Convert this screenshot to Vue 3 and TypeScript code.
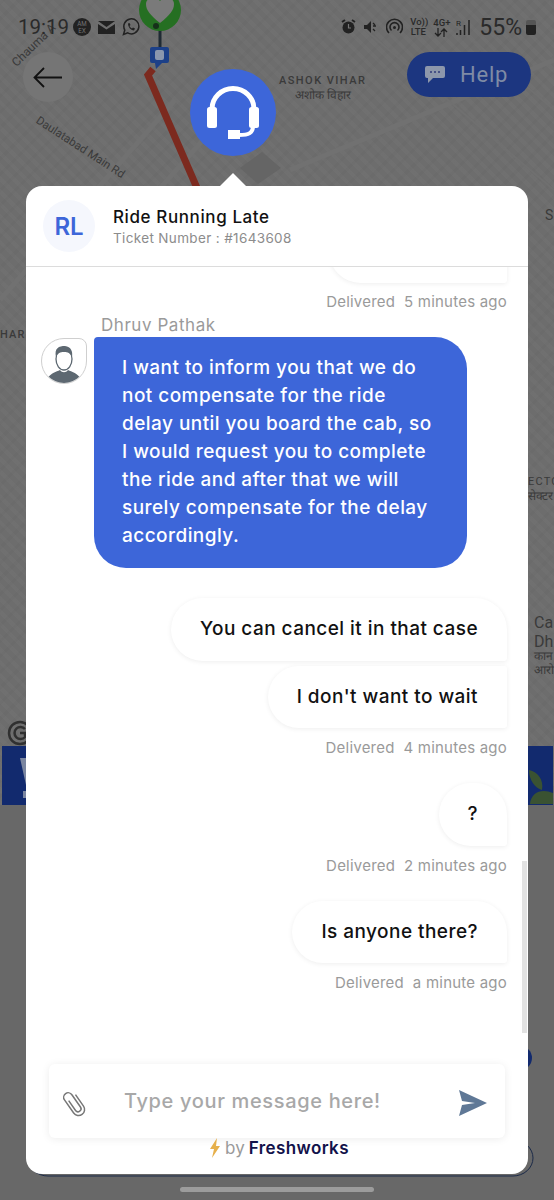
<script setup lang="ts">
interface Sent {
  text: string;
  status?: string;
}

const sentMessages: Sent[] = [
  { text: 'You can cancel it in that case' },
  { text: "I don't want to wait", status: '4 minutes ago' },
  { text: '?', status: '2 minutes ago' },
  { text: 'Is anyone there?', status: 'a minute ago' },
];
</script>

<template>
  <div class="screen">
    <!-- map behind the sheet -->
    <div class="map">
      <svg class="map-art" width="554" height="1200" viewBox="0 0 554 1200">
        <path d="M0 300 L175 100 M60 300 L230 110 M290 170 L554 60" stroke="#717171" stroke-width="5" fill="none" />
        <path d="M426 0 L554 110 M330 0 L554 190" stroke="#707070" stroke-width="2" fill="none" />
        <path d="M240 168 L262 152 L281 168 L258 184 Z" fill="#656565" />
        <path d="M153 69 L148 75 L197 188" stroke="#7c2a1f" stroke-width="7" fill="none" />
        <path d="M160 28 V50" stroke="#1f2a33" stroke-width="3" />
        <circle cx="160" cy="10" r="21" fill="#256f22" />
        <path d="M160 23 C150 15 146 10 146 4 C146 -3 156 -4 160 1 C164 -4 174 -3 174 4 C174 10 170 15 160 23 Z" fill="#7a7a7a" />
        <circle cx="156" cy="26" r="3" fill="#16301a" />
        <path d="M152 47 H167 A2 2 0 0 1 169 49 V61 A2 2 0 0 1 167 63 H162 L156 69 L155 63 H152 A2 2 0 0 1 150 61 V49 A2 2 0 0 1 152 47 Z" fill="#1c4088" />
        <rect x="155" y="50" width="9" height="10" rx="2" fill="#8a97ad" />
        <path d="M2 746 H26 V805 H2 Z M528 746 H553 V805 H528 Z" fill="#122a6e" />
        <path d="M20 758 H26 V785 Z M23 791 H26 V798 H23 Z" fill="#7b86a0" />
        <path d="M529 770 C538 772 544 780 542 790 C535 788 529 780 529 770 Z M530 804 C531 792 542 788 553 793 V804 Z" fill="#3a5232" />
        <circle cx="20" cy="733" r="11" fill="none" stroke="#303030" stroke-width="2.500" />
        <path d="M25 729A6 6 0 1 0 25 737V733H20" fill="none" stroke="#303030" stroke-width="2.500" />
        <circle cx="520" cy="1058" r="12" fill="#122a6e" />
        <rect x="28" y="1140" width="505" height="36" rx="20" fill="none" stroke="#1b2a48" stroke-width="1" />
      </svg>
      <span class="map-label road-a">Chauma A</span>
      <span class="map-label road-b">Daulatabad Main Rd</span>
      <span class="map-label area">ASHOK VIHAR<small>अशोक विहार</small></span>
      <span class="map-label edge-left">HAR</span>
      <span class="map-label edge-s">S</span>
      <span class="map-label edge-sector">ECTO<small>सेक्टर</small></span>
      <span class="map-label edge-ca">Ca<br />Dh<small>कान<br />आरो</small></span>
    </div>

    <!-- status bar -->
    <div class="status-bar">
      <span class="clock">19:19</span>
      <span class="amex">AM<br />EX</span>
      <svg width="17" height="13" viewBox="0 0 17 13"><path d="M0 0H17L8.500 6Z M0 3L8.500 8.500L17 3V13H0Z" fill="#222" /></svg>
      <svg class="wa" width="18" height="18" viewBox="0 0 18 18"><path d="M1.500 16.500L2.800 12A7.500 7.500 0 1 1 5.700 14.900Z" fill="none" stroke="#222" stroke-width="1.500" /><path d="M6 5.500C6 9 8.500 12 12 12.500L13 10.500L11 9.500L10 10.500C9 10 8 9 7.500 8L8.500 7L7.500 5Z" fill="#222" /></svg>
      <span class="status-gap"></span>
      <div class="status-right">
        <svg width="15" height="16" viewBox="0 0 15 16"><circle cx="7.500" cy="8.500" r="6" fill="#222" /><path d="M7.500 5V9H10" stroke="#777" stroke-width="1.200" fill="none" /><path d="M1 3L4 1M14 3L11 1" stroke="#222" stroke-width="2" /></svg>
        <svg width="16" height="16" viewBox="0 0 16 16"><path d="M1 6H4L8 2V14L4 10H1Z" fill="#222" /><path d="M10 4L12 6M10 7H13M10 10L12 12" stroke="#222" stroke-width="1.300" /></svg>
        <svg width="17" height="18" viewBox="0 0 17 18"><path d="M3 15A8 8 0 1 1 14 15M5.500 12.500A4.500 4.500 0 1 1 11.500 12.500" fill="none" stroke="#222" stroke-width="1.600" /><circle cx="8.500" cy="9.500" r="1.500" fill="#222" /></svg>
        <span class="net">Vo))<br />LTE</span>
        <span class="net">4G+
          <svg width="14" height="9" viewBox="0 0 14 9"><path d="M4 0V8M1 5L4 8L7 5M10 9V1M7 4L10 1L13 4" fill="none" stroke="#222" stroke-width="1.300" /></svg>
        </span>
        <svg width="15" height="17" viewBox="0 0 15 17"><text x="0" y="7" font-size="8" font-family="Roboto, sans-serif" fill="#222">R</text><path d="M1 16V14M4.500 16V11M8.500 16V6M13 16V1" stroke="#222" stroke-width="1.500" /></svg>
        <span class="battery-text">55%</span>
        <span class="battery"></span>
      </div>
    </div>

    <button class="back-btn">
      <svg width="30" height="21" viewBox="0 0 30 21"><path d="M29 10.500H1.500M11 1L1.500 10.500L11 20" fill="none" stroke="#111" stroke-width="1.800" /></svg>
    </button>

    <button class="help-btn">
      <svg width="22" height="20" viewBox="0 0 22 20"><path d="M3 1H19A2 2 0 0 1 21 3V11A2 2 0 0 1 19 13H9L4 18V13H3A2 2 0 0 1 1 11V3A2 2 0 0 1 3 1Z" fill="#8d97ab" /><circle cx="7" cy="7" r="1" fill="#303a7a" /><circle cx="11" cy="7" r="1" fill="#303a7a" /><circle cx="15" cy="7" r="1" fill="#303a7a" /></svg>
      Help
    </button>

    <div class="agent-badge">
      <svg width="52" height="54" viewBox="0 0 52 54">
        <path d="M5 23A21 20.500 0 0 1 47 23" fill="none" stroke="#fff" stroke-width="5" />
        <rect x="0" y="21" width="10" height="21" rx="2.500" fill="#fff" />
        <rect x="42" y="21" width="10" height="21" rx="2.500" fill="#fff" />
        <path d="M46 40C46 47 42 49 32 49" fill="none" stroke="#fff" stroke-width="4" />
        <rect x="21" y="44" width="12" height="9" fill="#fff" />
      </svg>
    </div>

    <span class="pointer"></span>

    <!-- conversation sheet -->
    <section class="sheet">
      <header class="sheet-head">
        <div class="initials">RL</div>
        <div>
          <h1>Ride Running Late</h1>
          <p>Ticket Number : #1643608</p>
        </div>
      </header>

      <div class="thread">
        <div class="bubble out cut-off"></div>
        <div class="delivered first">Delivered&nbsp; 5 minutes ago</div>

        <div class="agent-name">Dhruv Pathak</div>
        <div class="agent-row">
          <div class="avatar">
            <svg width="44" height="44" viewBox="0 0 44 44">
              <path d="M4 41C10 33 14 33 18 31C20 34 24 34 26 31C30 33 34 33 40 41C30 46 14 46 4 41Z" fill="#5d6871" />
              <ellipse cx="22" cy="20" rx="8" ry="11" fill="#fff" stroke="#5d6871" stroke-width="1.300" />
              <path d="M14 18C12 9 17 7 23 7C29 8 31 12 30 18C28 14 26 13 22 13C18 13 16 14 14 18Z" fill="#5d6871" />
            </svg>
          </div>
          <div class="bubble in">I want to inform you that we do not compensate for the ride delay until you board the cab, so I would request you to complete the ride and after that we will surely compensate for the delay accordingly.</div>
        </div>

        <template v-for="msg in sentMessages" :key="msg.text">
          <div class="bubble out" :class="{ tail: !msg.status }">{{ msg.text }}</div>
          <div v-if="msg.status" class="delivered">Delivered&nbsp; {{ msg.status }}</div>
        </template>

        <span class="scrollbar"></span>
      </div>

      <div class="composer">
        <svg width="26" height="30" viewBox="0 0 26 30">
          <g transform="rotate(-35 13 15)">
            <path d="M10 10V22A3 3 0 0 0 16 22V7A4.500 4.500 0 0 0 7 7V23A6 6 0 0 0 19 23V9" fill="none" stroke="#777" stroke-width="1.500" />
          </g>
        </svg>
        <span class="placeholder">Type your message here!</span>
        <svg width="30" height="28" viewBox="0 0 30 28">
          <path d="M1 1L29 14L1 27L4 16L17 14L4 12Z" fill="#5f7896" />
        </svg>
      </div>

      <footer class="brand">
        <svg width="12" height="20" viewBox="0 0 12 20"><path d="M8 0L1 11H5L3 20L11 8H7Z" fill="#e6b04c" /></svg>
        <span>by</span> <b>Freshworks</b>
      </footer>
    </section>

    <span class="home-bar"></span>
  </div>
</template>

<style>
html,
body {
  margin: 0;
  background: #686868;
}
</style>

<style scoped>
.screen {
  position: relative;
  width: 554px;
  height: 1200px;
  padding-top: 186px;
  box-sizing: border-box;
  overflow: hidden;
  background: #686868;
  font-family: Inter, "Noto Sans", sans-serif;
}

/* ---- map ---- */
.map {
  position: absolute;
  left: 0;
  right: 0;
  top: 0;
  height: 805px;
  background:
    repeating-linear-gradient(45deg, rgba(255, 255, 255, 0.018) 0 4px, transparent 4px 9px),
    repeating-linear-gradient(-45deg, rgba(0, 0, 0, 0.02) 0 3px, transparent 3px 11px),
    #6d6d6d;
}

.map-art {
  position: absolute;
  left: 0;
  top: 0;
}

.map-label {
  position: absolute;
  font-family: Roboto, sans-serif;
  color: #3a3a3a;
  font-size: 13px;
  white-space: nowrap;
}

.map-label small {
  display: block;
  font-size: 12px;
  letter-spacing: 0;
}

.road-a {
  left: 6px;
  top: 38px;
  transform: rotate(-44deg);
  font-size: 12px;
}

.road-b {
  left: 29px;
  top: 140px;
  transform: rotate(33deg);
  font-size: 11.500px;
}

.area {
  left: 279px;
  top: 73px;
  text-align: center;
  font-size: 11px;
  font-weight: 500;
  letter-spacing: 1.450px;
  line-height: 15px;
}

.edge-left {
  left: 0;
  top: 328px;
  font-size: 11px;
  font-weight: 500;
  letter-spacing: 1.200px;
}

.edge-s {
  left: 545px;
  top: 207px;
  font-size: 14px;
}

.edge-sector {
  left: 528px;
  top: 475px;
  font-size: 11px;
  letter-spacing: 1.200px;
  line-height: 14px;
}

.edge-ca {
  left: 534px;
  top: 613px;
  font-size: 16px;
  line-height: 19px;
}

.edge-ca small {
  line-height: 14px;
  margin-top: -2px;
}

/* ---- status bar ---- */
.status-bar {
  position: absolute;
  left: 18px;
  right: 18px;
  top: 14px;
  height: 26px;
  display: flex;
  align-items: center;
  gap: 7px;
  color: #2a2a2a;
}

.clock {
  width: 48px;
  font-family: Roboto, sans-serif;
  font-size: 20.500px;
}

.amex {
  width: 18px;
  height: 18px;
  border-radius: 50%;
  background: #222;
  color: #777;
  font-size: 6px;
  line-height: 7px;
  text-align: center;
  padding-top: 2px;
  box-sizing: border-box;
}

.status-gap {
  flex: 1;
}

.status-right {
  display: flex;
  align-items: center;
  gap: 7px;
}

.net {
  width: 16px;
  font-family: Roboto, sans-serif;
  font-size: 9.500px;
  font-weight: 500;
  line-height: 10px;
  text-align: center;
  white-space: nowrap;
}

.net svg {
  display: block;
  margin: 0 auto;
}

.battery-text {
  margin-left: 1px;
  font-family: Roboto, sans-serif;
  font-size: 23px;
}

.battery {
  width: 10px;
  height: 15px;
  margin-left: -3px;
  background: linear-gradient(#555 0 35%, #222 35%);
  border-radius: 2px;
}

/* ---- floating buttons ---- */
.back-btn {
  position: absolute;
  left: 23px;
  top: 52px;
  width: 50px;
  height: 50px;
  border: none;
  border-radius: 50%;
  padding: 0;
  background: #757575;
  display: flex;
  align-items: center;
  justify-content: center;
}

.help-btn {
  position: absolute;
  left: 407px;
  top: 52px;
  width: 124px;
  height: 45px;
  border: none;
  border-radius: 23px;
  background: #1c3680;
  color: #7f8ba5;
  font-family: Roboto, sans-serif;
  font-size: 22px;
  letter-spacing: 0.8px;
  display: flex;
  align-items: center;
  gap: 14px;
  padding: 0 0 0 17px;
}

.agent-badge {
  position: absolute;
  left: 190px;
  top: 69px;
  width: 86px;
  height: 87px;
  border-radius: 50%;
  background: #3d66d9;
  display: flex;
  align-items: center;
  justify-content: center;
}

.pointer {
  position: absolute;
  left: 220px;
  top: 173px;
  border-left: 13px solid transparent;
  border-right: 13px solid transparent;
  border-bottom: 13px solid #fff;
}

/* ---- sheet ---- */
.sheet {
  position: relative;
  margin: 0 26px;
  height: 988px;
  display: flex;
  flex-direction: column;
  background: #fff;
  border-radius: 16px;
  overflow: hidden;
}

.sheet-head {
  height: 81px;
  flex: none;
  box-sizing: border-box;
  padding: 14px 18px 0 17px;
  display: flex;
  gap: 18px;
  border-bottom: 1px solid #dcdcdc;
}

.initials {
  width: 52px;
  height: 52px;
  border-radius: 50%;
  background: #f5f7fd;
  color: #3d66d9;
  font-size: 24px;
  font-weight: 600;
  display: flex;
  align-items: center;
  justify-content: center;
}

.sheet-head h1 {
  margin: 6px 0 1px;
  font-size: 17px;
  font-weight: 500;
  line-height: 22px;
  letter-spacing: 0.6px;
  color: #111;
}

.sheet-head p {
  margin: 0;
  font-size: 13.500px;
  line-height: 18px;
  letter-spacing: 0.35px;
  color: #8c8c8c;
}

.thread {
  position: relative;
  flex: 1;
  overflow: hidden;
  display: flex;
  flex-direction: column;
  align-items: flex-end;
  padding-right: 21px;
  min-height: 0;
}

.bubble {
  box-sizing: border-box;
  font-size: 19px;
  line-height: 28px;
  letter-spacing: 0.45px;
}

.bubble.out {
  padding: 17px 29px 17.500px;
  border-radius: 32px 32px 3px 32px;
  background: #fff;
  color: #111;
  font-weight: 500;
  box-shadow: 0 1px 5px rgba(0, 0, 0, 0.07);
  margin-top: 26px;
}

.bubble.out.tail + .bubble.out {
  margin-top: 5px;
  border-radius: 32px 3px 3px 32px;
}

.bubble.cut-off {
  width: 178px;
  height: 63px;
  margin-top: -47px;
}

.delivered {
  margin-top: 10px;
  font-size: 15px;
  line-height: 19px;
  letter-spacing: 0.22px;
  color: #9a9a9a;
}

.delivered.first {
  margin-top: 9px;
}

.agent-name {
  align-self: flex-start;
  margin: 3px 0 0 75px;
  font-size: 17px;
  line-height: 22px;
  letter-spacing: 0.55px;
  color: #9a9a9a;
}

.agent-row {
  align-self: flex-start;
  display: flex;
  gap: 7px;
  margin: 1px 0 4px 15px;
}

.avatar {
  width: 44px;
  height: 44px;
  margin-top: 1px;
  overflow: hidden;
  border: 1px solid #cfcfcf;
  border-radius: 50% 8px 50% 50%;
  flex: none;
}

.bubble.in {
  width: 373px;
  padding: 17px 30px 18px 28px;
  border-radius: 4px 32px 32px 32px;
  background: #3d66d9;
  color: #fff;
  font-weight: 500;
}

.scrollbar {
  position: absolute;
  right: 1px;
  top: 594px;
  width: 5px;
  height: 172px;
  background: #e2e2e2;
}

.composer {
  flex: none;
  height: 74px;
  margin: 0 23px;
  padding: 4px 17px 0 12px;
  box-sizing: border-box;
  display: flex;
  align-items: center;
  justify-content: space-between;
  border-radius: 6px;
  box-shadow: 0 1px 8px rgba(0, 0, 0, 0.08);
}

.placeholder {
  flex: 1;
  margin-left: 37px;
  margin-top: -4px;
  font-size: 20px;
  font-weight: 500;
  letter-spacing: 0.65px;
  color: #a8a8a8;
}

.brand {
  flex: none;
  height: 36px;
  box-sizing: border-box;
  padding: 0 0 16px 4px;
  display: flex;
  align-items: center;
  justify-content: center;
  gap: 4px;
  font-size: 17px;
  color: #9a9a9a;
}

.brand b {
  font-weight: 600;
  letter-spacing: 0.4px;
  color: #12124a;
}

.home-bar {
  position: absolute;
  left: 180px;
  top: 1187px;
  width: 194px;
  height: 5px;
  border-radius: 3px;
  background: #9c9c9c;
}
</style>
